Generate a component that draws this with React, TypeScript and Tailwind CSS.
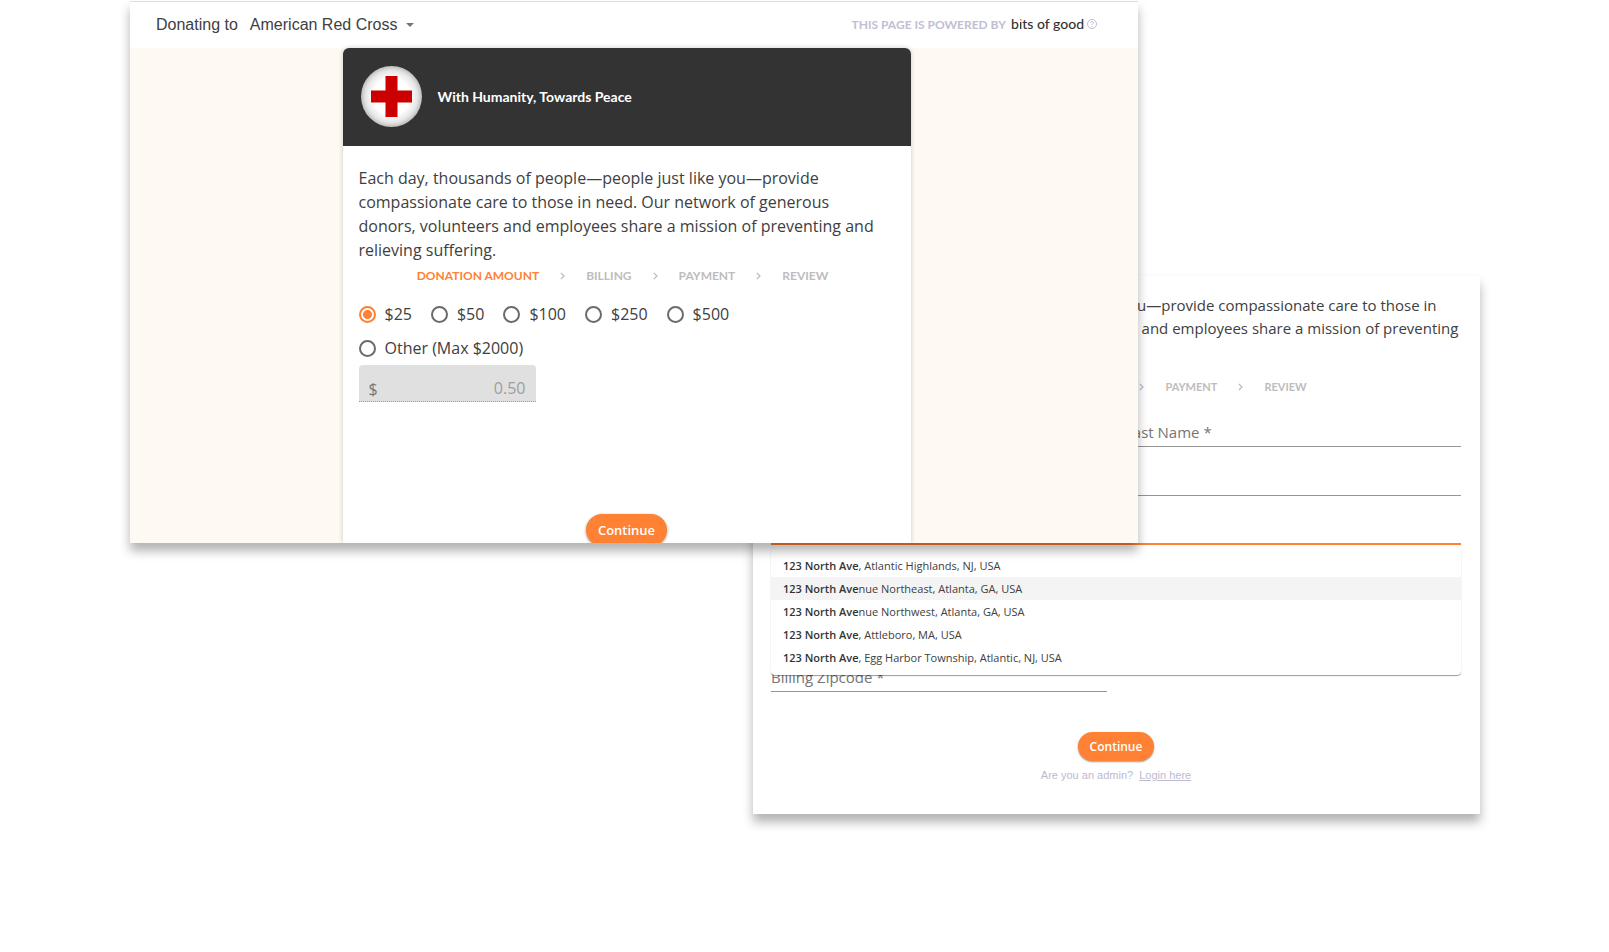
import React, { useState } from "react";

const MISSION =
  "Each day, thousands of people—people just like you—provide compassionate care to those in need. Our network of generous donors, volunteers and employees share a mission of preventing and relieving suffering.";

const AMOUNTS = ["$25", "$50", "$100", "$250", "$500"];

const SUGGESTIONS = [
  { match: "123 North Ave", rest: ", Atlantic Highlands, NJ, USA" },
  { match: "123 North Ave", rest: "nue Northeast, Atlanta, GA, USA" },
  { match: "123 North Ave", rest: "nue Northwest, Atlanta, GA, USA" },
  { match: "123 North Ave", rest: ", Attleboro, MA, USA" },
  { match: "123 North Ave", rest: ", Egg Harbor Township, Atlantic, NJ, USA" },
];

const SHADOW = "shadow-[0_8px_10px_rgba(0,0,0,0.3)]";

function StepArrow() {
  return (
    <svg className="h-2 w-[5px] shrink-0" viewBox="0 0 5 8" fill="none" stroke="#b9b6cf" strokeWidth="1.2" aria-hidden="true">
      <path d="M0.8 0.8 4 4 0.8 7.2" />
    </svg>
  );
}

function Steps({ active, small }: { active: number; small?: boolean }) {
  const names = ["DONATION AMOUNT", "BILLING", "PAYMENT", "REVIEW"];
  return (
    <ol className={`flex items-center justify-center gap-[21px] pr-2 font-[Lato,sans-serif] leading-4 font-bold ${small ? "text-[11px]" : "text-[12px]"}`}>
      {names.map((name, i) => (
        <React.Fragment key={name}>
          {i > 0 && (
            <li aria-hidden="true">
              <StepArrow />
            </li>
          )}
          <li className={i === active ? "text-[#ff8133]" : "text-[#bdbdbd]"}>{name}</li>
        </React.Fragment>
      ))}
    </ol>
  );
}

function Amount({ label, checked, onSelect }: { label: string; checked: boolean; onSelect: () => void }) {
  return (
    <label className="flex items-center gap-[9px]">
      <input
        type="radio"
        name="amount"
        checked={checked}
        onChange={onSelect}
        className="h-[17px] w-[17px] appearance-none rounded-full border-2 border-[#6b6b6b] checked:border-[#ff8133] checked:bg-[radial-gradient(circle,#ff8133_4px,transparent_5px)]"
      />
      {label}
    </label>
  );
}

function Field({ name, placeholder, focused, wide }: { name: string; placeholder?: string; focused?: boolean; wide?: boolean }) {
  const line = focused ? "border-b-2 border-[#ff8133]" : "border-b border-[#949494]";
  const span = wide ? "col-span-2" : "";
  return (
    <input
      type="text"
      aria-label={name}
      placeholder={placeholder}
      className={`mb-[20px] h-[29px] w-full min-w-0 bg-transparent text-[15px] outline-none placeholder:text-[#757575] ${line} ${span}`}
    />
  );
}

function BillingPanel() {
  return (
    <section className={`col-span-2 col-start-2 row-start-1 mt-[276px] bg-white pt-[18px] pr-[19px] pb-[31px] pl-[18px] ${SHADOW}`}>
      <p className="pl-3 text-[15px] leading-[23px] text-[#404040]">{MISSION}</p>
      <div className="mt-[16px]">
        <Steps active={1} small />
      </div>
      <div className="relative mt-[23px]">
        <form className="grid grid-cols-2 gap-x-[18px]" onSubmit={(e) => e.preventDefault()}>
          <Field name="First Name" />
          <Field name="Last Name" placeholder="Last Name *" />
          <Field name="Email" wide />
          <Field name="Billing Address" wide focused />
          <Field name="Billing City" wide />
          <Field name="Billing State" wide />
          <Field name="Billing Zipcode" placeholder="Billing Zipcode *" />
        </form>
        <ul className="absolute inset-x-0 top-[130px] rounded-sm bg-white py-[6px] text-[11px] leading-[23px] text-[#404040] shadow-[0_1px_1px_rgba(0,0,0,0.4)]">
          {SUGGESTIONS.map((s, i) => (
            <li key={s.rest} className={i === 1 ? "bg-[#f4f4f4] px-3" : "px-3"}>
              <b className="font-semibold text-[#333333]">{s.match}</b>
              {s.rest}
            </li>
          ))}
        </ul>
      </div>
      <div className="mt-[20px] flex flex-col items-center gap-[6px]">
        <button className="h-[29px] rounded-full bg-[#ff8133] px-3 text-[12px] font-semibold text-white shadow-[0_1px_2px_rgba(0,0,0,0.4)]">Continue</button>
        <p className="font-['Liberation_Sans',Arial,sans-serif] text-[11px] leading-4 text-[#bcb9d0]">
          Are you an admin?
          <a href="#login" className="ml-[6px] underline">Login here</a>
        </p>
      </div>
    </section>
  );
}

function DonationPanel() {
  const [amount, setAmount] = useState("$25");
  return (
    <section className={`z-10 col-span-2 col-start-1 row-start-1 mt-px h-[542px] self-start overflow-hidden border-t border-[#dedede] bg-white ${SHADOW}`}>
      <header className="flex h-[46px] items-center justify-between pr-[41px] pl-[26px]">
        <div className="flex items-center gap-3 font-['Liberation_Sans',Arial,sans-serif] text-[16px] leading-6 text-[#404040]">
          <label htmlFor="charity">Donating to</label>
          <span className="flex items-center gap-2">
            <select id="charity" className="appearance-none bg-transparent outline-none">
              <option>American Red Cross</option>
            </select>
            <svg className="h-1 w-2" viewBox="0 0 8 4" fill="#757575" aria-hidden="true">
              <path d="M0 0h8L4 4z" />
            </svg>
          </span>
        </div>
        <div className="flex items-center gap-[5px] font-[Lato,sans-serif]">
          <span className="text-[12px] font-bold text-[#bfbed4]">THIS PAGE IS POWERED BY</span>
          <span className="flex items-center gap-[3px] pb-[3px]">
            <span className="text-[14px] leading-5 font-medium text-[#333333]">
              b<span className="bg-[linear-gradient(#ff8133_0_7px,#333333_7px)] bg-clip-text text-transparent">i</span>ts of good
            </span>
            <svg className="h-[10px] w-[10px]" viewBox="0 0 10 10" fill="none" stroke="#bfbed4" strokeWidth="1" aria-hidden="true">
              <circle cx="5" cy="5" r="4.5" />
              <path d="M3.6 4a1.4 1.4 0 1 1 2 1.2c-.4.2-.6.4-.6.8M5 7v.8" />
            </svg>
          </span>
        </div>
      </header>
      <div className="flex h-[495px] justify-center bg-[#fef9f2] pr-[15px]">
        <article className="flex w-[568px] flex-col rounded-t-md bg-white shadow-[0_0_5px_rgba(0,0,0,0.2)]">
          <div className="flex h-[98px] shrink-0 items-center gap-4 rounded-t-md bg-[#333333] px-[18px] pb-px">
            <svg className="h-[61px] w-[61px]" viewBox="0 0 61 61" role="img" aria-label="American Red Cross">
              <defs>
                <radialGradient id="badge">
                  <stop offset="0.6" stopColor="#ffffff" />
                  <stop offset="0.85" stopColor="#e6e6e6" />
                  <stop offset="1" stopColor="#bdbdbd" />
                </radialGradient>
              </defs>
              <circle cx="30.5" cy="30.5" r="30.5" fill="url(#badge)" />
              <path d="M24.5 10h12v14.500h14.500v12H36.500V51h-12V36.500H10v-12h14.500z" fill="#cc0000" />
            </svg>
            <h1 className="font-[Lato,sans-serif] text-[14px] font-bold text-white">With Humanity, Towards Peace</h1>
          </div>
          <form className="flex flex-col px-4 pt-5 text-[16px] leading-6 text-[#404040]" onSubmit={(e) => e.preventDefault()}>
            <p className="pr-2">{MISSION}</p>
            <div className="mt-[6px]">
              <Steps active={0} />
            </div>
            <div className="mt-[18px] flex gap-[19px]">
              {AMOUNTS.map((a) => (
                <Amount key={a} label={a} checked={amount === a} onSelect={() => setAmount(a)} />
              ))}
            </div>
            <div className="mt-[10px] flex">
              <Amount label="Other (Max $2000)" checked={amount === "other"} onSelect={() => setAmount("other")} />
            </div>
            <div className="mt-[5px] flex h-[37px] w-[177px] items-end rounded-t border-b border-dotted border-[#9e9e9e] bg-[#e0e0e0] px-[10px] text-[#757575]">
              <label htmlFor="other-amount">$</label>
              <input id="other-amount" disabled placeholder="0.50" className="h-[26px] w-full min-w-0 bg-transparent text-right placeholder:text-[#9e9e9e]" />
            </div>
            <button className="mt-[112px] h-[32px] self-center rounded-full bg-[#ff8133] px-3 text-[13px] font-semibold text-white shadow-[0_1px_3px_rgba(0,0,0,0.4)]">Continue</button>
          </form>
        </article>
      </div>
    </section>
  );
}

export default function App() {
  return (
    <main className="grid min-h-screen grid-cols-[623fr_385fr_342fr] content-start bg-white pr-[129px] pl-[130px] font-['Open_Sans',sans-serif]">
      <DonationPanel />
      <BillingPanel />
    </main>
  );
}
